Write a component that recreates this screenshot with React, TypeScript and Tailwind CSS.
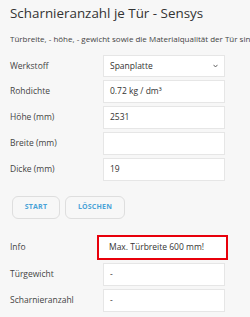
const rows = [
  { label: 'Rohdichte', value: '0.72 kg / dm³' },
  { label: 'Höhe (mm)', value: '2531' },
  { label: 'Breite (mm)', value: '' },
  { label: 'Dicke (mm)', value: '19' },
];

const results = [
  { label: 'Türgewicht', value: '-' },
  { label: 'Scharnieranzahl', value: '-' },
];

function Field({ label, children }: { label: string; children: React.ReactNode }) {
  return (
    <div className="flex items-center">
      <div className="w-[93px] text-[8.5px] text-[#444]">{label}</div>
      {children}
    </div>
  );
}

function Box({ value }: { value: string }) {
  return (
    <div className="flex h-[23px] w-[122px] items-center border border-[#e6e6e6] bg-white pl-[6px] text-[8.5px] text-[#333]">
      {value}
    </div>
  );
}

export default function App() {
  return (
    <div
      className="h-[317px] w-[250px] overflow-hidden bg-[#f7f7f7] pl-[10px] pt-[2px]"
      style={{ fontFamily: '"Open Sans", sans-serif' }}
    >
      <h1 className="whitespace-nowrap text-[13.4px] leading-[22px] text-[#333]">Scharnieranzahl je Tür - Sensys</h1>
      <p className="mt-[9px] overflow-hidden whitespace-nowrap text-[8px] leading-[12px] text-[#444]">
        Türbreite, - höhe, - gewicht sowie die Materialqualität der Tür sind anzugeben.
      </p>

      <div className="mt-[10px] flex flex-col gap-[3px]">
        <Field label="Werkstoff">
          <div className="flex h-[22px] w-[122px] items-center justify-between border border-[#e6e6e6] bg-white pl-[6px] pr-[6px] text-[8.5px] text-[#333]">
            <span>Spanplatte</span>
            <svg width="5" height="4" viewBox="0 0 5 4" fill="none" stroke="#555" strokeWidth="0.9">
              <path d="M0.5 0.8 L2.5 3 L4.5 0.8" />
            </svg>
          </div>
        </Field>
        {rows.map((r) => (
          <Field key={r.label} label={r.label}>
            <Box value={r.value} />
          </Field>
        ))}
      </div>

      <div className="mt-[15px] flex gap-[5px] pl-[2px]">
        <button className="h-[23px] w-[48px] rounded-[6px] border border-[#dedede] bg-[#f7f7f7] text-[7px] font-bold tracking-[0.2px] text-[#4aa3d8]">
          START
        </button>
        <button className="h-[23px] w-[60px] rounded-[6px] border border-[#dedede] bg-[#f7f7f7] text-[7px] font-bold tracking-[0.2px] text-[#4aa3d8]">
          LÖSCHEN
        </button>
      </div>

      <div className="mt-[16px] flex flex-col gap-[3px]">
        <Field label="Info">
          <div className="ml-[-6px] flex h-[25px] w-[131px] items-center border-2 border-[#e8000b] bg-white pl-[10px] text-[8.5px] text-[#333]">
            Max. Türbreite 600 mm!
          </div>
        </Field>
        {results.map((r) => (
          <Field key={r.label} label={r.label}>
            <Box value={r.value} />
          </Field>
        ))}
      </div>
    </div>
  );
}
